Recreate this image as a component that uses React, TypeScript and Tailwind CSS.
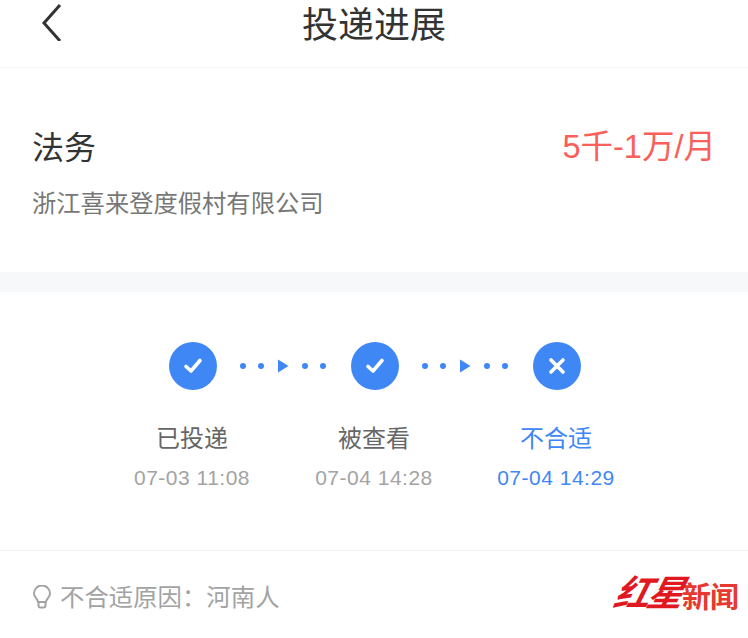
const cjk = "font-['Noto_Sans_CJK_SC','Liberation_Sans',sans-serif]";

function Connector() {
  return (
    <div className="flex w-[134px] items-center justify-center">
      <svg width="96" height="14" viewBox="0 0 96 14" className="block">
        <g fill="#3f87f5">
          <circle cx="7" cy="7" r="3" />
          <circle cx="25" cy="7" r="3" />
          <path d="M42 0.5 L52.5 7 L42 13.5 Z" />
          <circle cx="69" cy="7" r="3" />
          <circle cx="87" cy="7" r="3" />
        </g>
      </svg>
    </div>
  );
}

function StepIcon({ kind }: { kind: "check" | "x" }) {
  return (
    <div className="flex h-12 w-12 shrink-0 items-center justify-center rounded-full bg-[#3f87f5]">
      <svg width="24" height="24" viewBox="0 0 24 24" fill="none" stroke="#fff" strokeWidth="3.6" strokeLinecap="round" strokeLinejoin="round">
        {kind === "check" ? <path d="M5 12.5 L10 17 L19 6.5" /> : <path d="M6 6 L18 18 M18 6 L6 18" />}
      </svg>
    </div>
  );
}

function Label({ title, time, active }: { title: string; time: string; active?: boolean }) {
  return (
    <div className="flex w-[182px] flex-col items-center">
      <div className={`text-[24px] leading-[32px] ${active ? "text-[#3f87f5]" : "text-[#666666]"}`}>{title}</div>
      <div className={`mt-[10px] whitespace-nowrap font-['Liberation_Sans',sans-serif] text-[21px] leading-[30px] tracking-[0.5px] ${active ? "text-[#3f87f5]" : "text-[#a3a3a3]"}`}>{time}</div>
    </div>
  );
}

export default function App() {
  return (
    <div className={`flex h-[638px] w-[748px] flex-col overflow-hidden bg-white ${cjk}`}>
      <header className="relative flex h-[68px] shrink-0 items-start justify-center border-b border-[#f5f5f5] pt-[2px]">
        <svg width="24" height="38" viewBox="0 0 24 38" fill="none" stroke="#333" strokeWidth="3" className="absolute left-[40px] top-[3px]">
          <path d="M20 2 L4 20 L20 38" />
        </svg>
        <h1 className="text-[36px] font-normal leading-[40px] text-[#333333]">投递进展</h1>
      </header>

      <section className="flex h-[204px] shrink-0 flex-col px-[32px]">
        <div className="mt-[51px] flex items-start justify-between">
          <div className="mt-[2px] text-[32px] leading-[48px] text-[#333333]">法务</div>
          <div className="mt-[1px] text-[32.5px] leading-[48px] text-[#f9605a]">
            <span className="font-['Liberation_Sans',sans-serif]">5</span>千<span className="font-['Liberation_Sans',sans-serif]">-1</span>万<span className="font-['Liberation_Sans',sans-serif]">/</span>月
          </div>
        </div>
        <div className="mt-[13px] text-[24.3px] leading-[36px] text-[#777777]">浙江喜来登度假村有限公司</div>
      </section>

      <div className="h-[20px] shrink-0 bg-[#f7f8fa]" />

      <section className="flex h-[259px] shrink-0 flex-col items-center border-b border-[#f3f3f3] pl-[2px] pt-[50px]">
        <div className="flex items-center">
          <StepIcon kind="check" />
          <Connector />
          <StepIcon kind="check" />
          <Connector />
          <StepIcon kind="x" />
        </div>
        <div className="mr-[2px] mt-[31px] flex">
          <Label title="已投递" time="07-03 11:08" />
          <Label title="被查看" time="07-04 14:28" />
          <Label title="不合适" time="07-04 14:29" active />
        </div>
      </section>

      <footer className="relative flex flex-1 items-start pl-[32px] pt-[27px]">
        <svg width="20" height="24" viewBox="0 0 20 24" fill="none" stroke="#a3a3a3" strokeWidth="2" className="mr-[8px] mt-[7px]">
          <path d="M6 17 C6 14 2 12.5 2 8.5 A8 8 0 0 1 18 8.5 C18 12.5 14 14 14 17 Z" />
          <path d="M6.5 17 L6.5 20.5 Q6.5 22.5 8.5 22.5 L11.5 22.5 Q13.5 22.5 13.5 20.5 L13.5 17" />
        </svg>
        <div className="text-[24.4px] leading-[36px] text-[#a3a3a3]">不合适原因：河南人</div>
        <div className="absolute left-[616px] top-[16px] flex items-end">
          <span className="skew-x-[-14deg] text-[36px] font-bold italic leading-[46px] tracking-[-3px] text-[#e0181f]">红星</span>
          <span className="mb-[1px] text-[29px] font-bold leading-[34px] tracking-[-1px] text-[#e6392f]">新闻</span>
        </div>
      </footer>
    </div>
  );
}
